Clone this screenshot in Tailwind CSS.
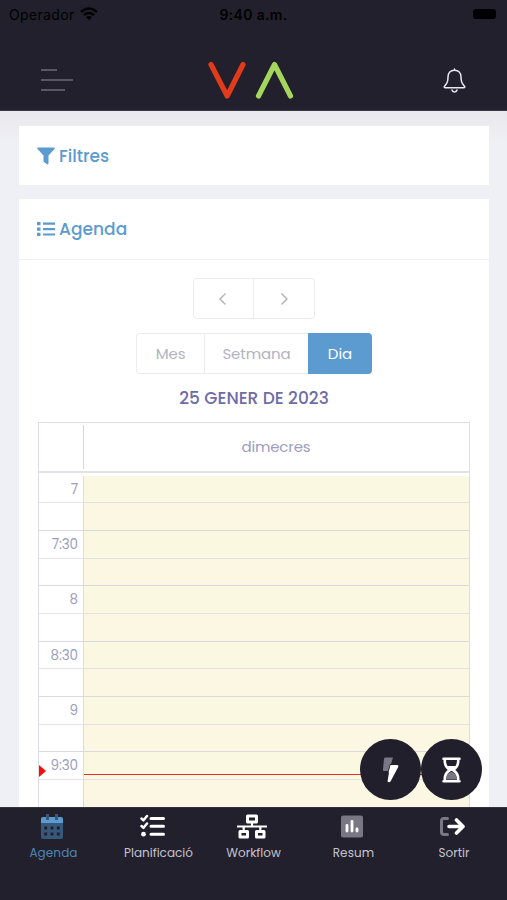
<!DOCTYPE html>
<html lang="ca">
<head>
  <meta charset="UTF-8">
  <meta name="viewport" content="width=device-width, initial-scale=1.0">
  <title>Agenda</title>
  <script src="https://cdn.jsdelivr.net/npm/@tailwindcss/browser@4"></script>
</head>
<body class="bg-[#eff0f5] font-[Poppins,Inter,sans-serif]">
  <div class="relative flex h-[900px] w-[507px] flex-col overflow-hidden">

    <!-- Header -->
    <header class="h-[111px] shrink-0 border-b border-[#3b3843] bg-[#22202c]">
      <div class="grid h-7 grid-cols-3 items-center pr-[11px] pl-[9px] font-[Inter,sans-serif] text-black">
        <div class="flex items-center gap-[5px]">
          <span class="text-[14px] tracking-[0.350px]">Operador</span>
          <svg class="h-[14px] w-[18px]" viewBox="0 0 18 14" fill="none" stroke="currentColor" stroke-width="2.4">
            <path d="M1 5Q9 -2 17 5M4 8.200Q9 4 14 8.200"/>
            <path d="M9 13L6 10.200Q9 8 12 10.200Z" fill="currentColor" stroke="none"/>
          </svg>
        </div>
        <span class="pl-[2px] text-center text-[14px] font-semibold whitespace-nowrap tracking-[0.350px]">9:40 a.m.</span>
        <div class="h-[10px] w-[23px] justify-self-end rounded-[3px] bg-black"></div>
      </div>
      <div class="flex h-[82px] items-start justify-between pr-[40px] pl-[41px]">
        <div class="mt-[41px] flex w-[60px] flex-col gap-[8px]">
          <div class="h-[2px] w-[16px] bg-[#5b5866]"></div>
          <div class="h-[2px] w-[32px] bg-[#5b5866]"></div>
          <div class="h-[2px] w-[24px] bg-[#5b5866]"></div>
        </div>
        <svg class="mt-[32px] ml-[5px] h-[42px] w-[86px]" viewBox="0 0 86 42" fill="none" stroke-width="5.200" stroke-linecap="round" stroke-linejoin="round">
          <path d="M3 4.500L19.200 36L35 4.500" stroke="#e23b1b"/>
          <path d="M50.500 36L66.500 4.500L82.500 36" stroke="#a5d65c"/>
        </svg>
        <div class="flex w-[72px] justify-end">
          <svg class="mt-[40px] h-[25px] w-[25px]" viewBox="0 0 25 25" fill="none" stroke="#e8e7ee" stroke-width="1.500" stroke-linecap="round" stroke-linejoin="round">
            <path d="M12.500 2.200C8.500 2.200 6 5 6 9C6 14 5.300 15.500 3 17.600C1.500 18.900 2.200 19.700 3.500 19.700H21.500C22.800 19.700 23.500 18.900 22 17.600C19.700 15.500 19 14 19 9C19 5 16.500 2.200 12.500 2.200Z"/>
            <path d="M12.500 1V2M10 22C10.500 24.500 14.500 24.500 15 22"/>
          </svg>
        </div>
      </div>
    </header>

    <main class="flex min-h-0 flex-1 flex-col gap-[14px] overflow-hidden bg-linear-to-b from-[#e9e8ed] to-[#eff0f5] to-5% pt-[15px] pr-[18px] pl-[19px]">
      <section class="flex h-[59px] shrink-0 items-center gap-[4px] bg-white pl-[18px] text-[#5b9bd0]">
        <svg class="h-[18px] w-[18px]" viewBox="0 0 18 18" fill="currentColor">
          <path d="M1 .5H17Q18.300 .9 17.500 2L11.500 8.500V16.500Q11.200 17.800 10 17.200L7 15Q6.500 14.500 6.500 14V8.500L.5 2Q-.3 .9 1 .5Z"/>
        </svg>
        <h2 class="pt-[2px] text-[17px] font-medium">Filtres</h2>
      </section>

      <section class="h-[640px] shrink-0 bg-white">
        <div class="flex h-[61px] items-center gap-[4px] border-b border-[#f1f1f4] pl-[18px] text-[#5b9bd0]">
          <svg class="h-[16px] w-[18px]" viewBox="0 0 18 16" fill="currentColor">
            <path d="M0 1H3.500V4.300H0ZM0 6.400H3.500V9.700H0ZM0 11.800H3.500V15.100H0ZM6 1.500H18V3.700H6ZM6 7H18V9.200H6ZM6 12.400H18V14.600H6Z"/>
          </svg>
          <h2 class="pt-[2px] text-[17px] font-medium tracking-[0.050px]">Agenda</h2>
        </div>

        <div class="flex flex-col items-center px-[19px] pt-[18px]">
          <div class="flex h-[41px] w-[122px] rounded-[4px] border border-[#ececf0] text-[#b0b0bc]">
            <button class="flex w-[60px] items-center justify-center border-r border-[#ececf0] pr-[2px]">
              <svg class="h-[14px] w-[9px]" viewBox="0 0 9 14" fill="none" stroke="currentColor" stroke-width="1.400"><path d="M7.500 1.500L2 7L7.500 12.500"/></svg>
            </button>
            <button class="flex w-[60px] items-center justify-center">
              <svg class="h-[14px] w-[9px]" viewBox="0 0 9 14" fill="none" stroke="currentColor" stroke-width="1.400"><path d="M1.500 1.500L7 7L1.500 12.500"/></svg>
            </button>
          </div>

          <div class="mt-[14px] flex h-[41px] w-[236px] text-[15px] text-[#b3b2c1]">
            <button class="w-[68px] rounded-l-[4px] border border-r-0 border-[#ececf0] pt-[1px] tracking-[-0.100px]">Mes</button>
            <button class="w-[104px] border border-r-0 border-[#ececf0] pt-[1px] tracking-[-0.100px]">Setmana</button>
            <button class="w-[64px] rounded-r-[4px] bg-[#5b9bd0] pt-[1px] text-white">Dia</button>
          </div>

          <h3 class="mt-[11px] text-[17px] leading-[26px] font-medium whitespace-nowrap text-[#6e6ca6]">25 GENER DE 2023</h3>

          <!-- Day grid -->
          <div class="relative mt-[11px] w-[432px] border border-[#dddde3] text-[#9d9cc0]">
            <div class="flex h-[50px] border-b-2 border-[#e2e2e7]">
              <div class="my-[2px] w-[45px] border-r border-[#d5d5dc]"></div>
              <div class="flex flex-1 items-center justify-center pt-[1px] pr-[1px] text-[15px] tracking-[-0.200px]">dimecres</div>
            </div>
            <div id="slots" class="pt-[2.600px]"></div>
            <div class="absolute top-[350.500px] right-0 left-[45px] h-[1.500px] bg-[#ee2b2b]"></div>
            <svg class="absolute top-[342px] left-0 h-[12px] w-[7px]" viewBox="0 0 7 12" fill="#f80b0b"><path d="M0 0L7 6L0 12Z"/></svg>
          </div>
        </div>
      </section>
    </main>

    <!-- Floating buttons -->
    <div class="absolute top-[739px] left-[360px] flex">
      <button class="flex h-[61px] w-[61px] items-center justify-center rounded-full bg-[#211f2b]">
        <svg class="h-[26px] w-[18px]" viewBox="0 0 18 26">
          <path d="M3 .5H11L9 7H8L6 14H2Q.8 14 1 12.500L2 1.500Z" fill="#797784"/>
          <path d="M8.500 8H15.500Q17 8.500 16.200 10L8.500 24.500Q7 26 5.500 24.500L7 15.500H6.500Z" fill="#fff"/>
        </svg>
      </button>
      <button class="flex h-[61px] w-[61px] items-center justify-center rounded-full bg-[#211f2b]">
        <svg class="h-[26px] w-[19px]" viewBox="0 0 19 26">
          <path d="M4 22.500Q4.500 15.500 9.500 15Q14.500 15.500 15 22.500Z" fill="#797784"/>
          <path d="M1.500 1.800H17.500M1.500 24.200H17.500M2.800 2V4Q2.800 10 8 13Q2.800 16 2.800 22V24M16.200 2V4Q16.200 10 11 13Q16.200 16 16.200 22V24" fill="none" stroke="#fff" stroke-width="2.600" stroke-linecap="round"/>
          <path d="M5 9H14L9.500 14Z" fill="#fff"/>
        </svg>
      </button>
    </div>

    <!-- Tab bar -->
    <nav class="z-10 grid h-[93px] shrink-0 grid-cols-[repeat(5,100px)] content-start border-t border-[#34323d] bg-[#22202c] pl-[2px] text-[12px] text-[#c4c3cf]">
      <a class="flex flex-col items-center pt-[6px]">
        <svg class="-ml-px h-[25px] w-[22px]" viewBox="0 0 22 25">
          <path d="M0 9H22V23Q22 25 20 25H2Q0 25 0 23Z" fill="#37587a"/>
          <path d="M2 3H20Q22 3 22 5V9H0V5Q0 3 2 3Z" fill="#5b9bd0"/>
          <path d="M5 0H8V6H5ZM14 0H17V6H14Z" fill="#37587a"/>
          <path d="M3.200 12.500H6.200V15.500H3.200ZM9.500 12.500H12.500V15.500H9.500ZM15.800 12.500H18.800V15.500H15.800ZM3.200 18.500H6.200V21.500H3.200ZM9.500 18.500H12.500V21.500H9.500ZM15.800 18.500H18.800V21.500H15.800Z" fill="#22202c"/>
        </svg>
        <span class="mt-[5px] pl-[3px] tracking-[0.100px] text-[#4c86b8]">Agenda</span>
      </a>
      <a class="flex flex-col items-center pt-[6px]">
        <svg class="h-[25px] w-[25px]" viewBox="0 0 25 25" fill="none" stroke="#fff" stroke-width="2.500" stroke-linecap="round" stroke-linejoin="round">
          <path d="M1.500 4.500L3.500 6.300L7 2M1.500 12L3.500 13.800L7 9.500"/>
          <path d="M11 4.500H23.500M11 12.300H23.500M11 20.200H23.500" stroke-width="3"/>
          <circle cx="3.500" cy="20.200" r="2.400" fill="#fff" stroke="none"/>
        </svg>
        <span class="mt-[5px] pl-[13px]">Planificació</span>
      </a>
      <a class="flex flex-col items-center pt-[6px]">
        <svg class="h-[25px] w-[30px]" viewBox="0 0 30 25" fill="none" stroke="#fff" stroke-width="3" stroke-linejoin="round">
          <path d="M10.500 2H19.500V8H10.500ZM3 17.500H10.500V23H3ZM19.500 17.500H27V23H19.500Z"/>
          <path d="M15 8V12.500M0 12.500H30M6.700 12.500V17M23.300 12.500V17" stroke-width="2.200"/>
        </svg>
        <span class="mt-[5px] pl-[3px]">Workflow</span>
      </a>
      <a class="flex flex-col items-center pt-[6px]">
        <svg class="h-[25px] w-[22px]" viewBox="0 0 22 25">
          <rect y="1.500" width="22" height="22" rx="2" fill="#797784"/>
          <path d="M6 11.500V17M11 7.500V17M16 15V17" stroke="#fff" stroke-width="2.800" stroke-linecap="round"/>
        </svg>
        <span class="mt-[5px] pl-[3px] tracking-[0.100px]">Resum</span>
      </a>
      <a class="flex flex-col items-center pt-[6px]">
        <svg class="h-[25px] w-[26px]" viewBox="0 0 26 25" fill="none" stroke-linecap="round" stroke-linejoin="round">
          <path d="M8.500 4.500H5Q2.500 4.500 2.500 7V18Q2.500 20.500 5 20.500H8.500" stroke="#797784" stroke-width="3"/>
          <path d="M10 12.500H23.500M17.500 6L24 12.500L17.500 19" stroke="#fff" stroke-width="3.600"/>
        </svg>
        <span class="mt-[5px] pl-[4px]">Sortir</span>
      </a>
    </nav>
  </div>

  <script>
    const hours = ['7', '7:30', '8', '8:30', '9', '9:30'];
    const slots = document.getElementById('slots');

    // Each label covers two quarter-hour rows
    hours.forEach(hour => {
      slots.insertAdjacentHTML('beforeend', `
        <div class="flex h-[27.700px]">
          <div class="w-[45px] border-r border-b border-r-[#dddde3] border-b-[#e6e6eb] pt-[4px] pr-[5px] text-right text-[13.500px] leading-[20px] tracking-[-0.100px]">${hour}</div>
          <div class="flex-1 border-b border-[#e2e1df] bg-[#fbf8e2]"></div>
        </div>
        <div class="flex h-[27.700px]">
          <div class="w-[45px] border-r border-b border-[#d9d9df]"></div>
          <div class="flex-1 border-b border-[#d9d8dc] bg-[#fcf7e3]"></div>
        </div>
      `);
    });
  </script>
</body>
</html>
